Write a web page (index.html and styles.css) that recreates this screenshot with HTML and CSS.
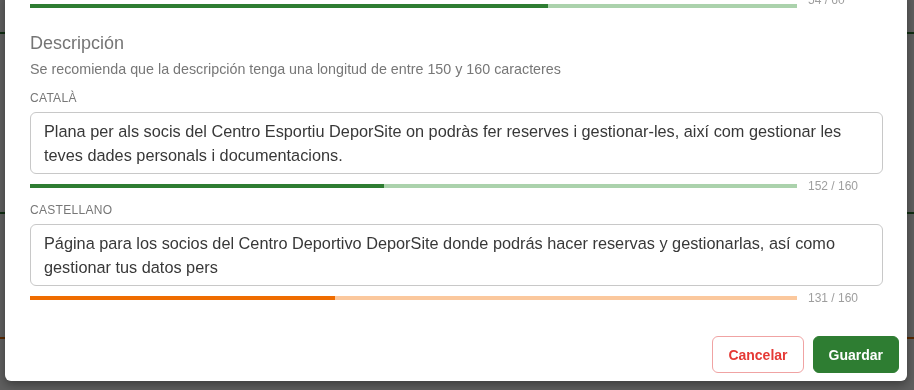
FILE: index.html
```html
<!DOCTYPE html>
<html lang="es">
<head>
  <meta charset="UTF-8" />
  <meta name="viewport" content="width=device-width, initial-scale=1.0" />
  <title>Descripción</title>
  <link rel="stylesheet" href="styles.css">
</head>
<body>

  <div class="page">
    <div class="page-line line-green first"></div>
    <div class="page-line line-green second"></div>
    <div class="page-line line-orange third"></div>
  </div>

  <div class="backdrop"></div>

  <div class="dialog">
    <div class="dialog-content">

      <div class="meter meter-prev">
        <div class="track green"><div class="fill" style="width: 67.5%;"></div></div>
        <span class="count">54 / 60</span>
      </div>

      <h2 class="section-title">Descripción</h2>
      <p class="hint">Se recomienda que la descripción tenga una longitud de entre 150 y 160 caracteres</p>

      <div class="field">
        <label class="field-label">Català</label>
        <div class="field-input">Plana per als socis del Centro Esportiu DeporSite on podràs fer reserves i gestionar-les, així com gestionar les teves dades personals i documentacions.</div>
        <div class="meter">
          <div class="track green"><div class="fill" style="width: 46.2%;"></div></div>
          <span class="count">152 / 160</span>
        </div>
      </div>

      <div class="field">
        <label class="field-label">Castellano</label>
        <div class="field-input">Página para los socios del Centro Deportivo DeporSite donde podrás hacer reservas y gestionarlas, así como gestionar tus datos pers</div>
        <div class="meter">
          <div class="track orange"><div class="fill" style="width: 39.8%;"></div></div>
          <span class="count">131 / 160</span>
        </div>
      </div>

    </div>

    <div class="dialog-actions">
      <button class="btn btn-cancel">Cancelar</button>
      <button class="btn btn-save">Guardar</button>
    </div>
  </div>

</body>
</html>
```

FILE: styles.css
```css
body {
  margin: 0;
  height: 390px;
  overflow: hidden;
  background-color: #fff;
  font-family: "Liberation Sans", Arial, sans-serif;
}

.page {
  padding-top: 32px;
}

.page-line {
  height: 2px;
}

.page-line.line-green {
  background-color: #2e7d32;
}

.page-line.line-orange {
  background-color: #ef6c00;
}

.page-line.second {
  margin-top: 178px;
}

.page-line.third {
  margin-top: 123px;
}

.backdrop {
  position: fixed;
  inset: 0;
  background-color: rgba(0, 0, 0, 0.63);
}

.dialog {
  position: fixed;
  top: -10px;
  bottom: 9px;
  left: 5px;
  width: 902px;
  background-color: #fff;
  border-radius: 6px;
  box-shadow: 0 4px 10px rgba(0, 0, 0, 0.35);
  display: flex;
  flex-direction: column;
}

.dialog-content {
  padding: 8px 24px 0 25px;
}

.meter {
  display: flex;
  align-items: center;
  height: 16px;
  margin-top: 4px;
}

.meter.meter-prev {
  margin-top: 0;
}

.meter.meter-prev .count {
  margin-bottom: 12px;
}

.track {
  flex: 1;
  height: 4px;
}

.track .fill {
  height: 100%;
}

.track.green {
  background-color: #abd2ac;
}

.track.green .fill {
  background-color: #2e7d32;
}

.track.orange {
  background-color: #fbc89d;
}

.track.orange .fill {
  background-color: #ef6c00;
}

.count {
  width: 75px;
  padding-left: 11px;
  font-size: 12px;
  line-height: 16px;
  color: #9e9e9e;
}

.section-title {
  margin: 18px 0 0;
  font-size: 18px;
  line-height: 22px;
  font-weight: normal;
  color: #757575;
}

.hint {
  margin: 6px 0 0;
  font-size: 14.3px;
  line-height: 18px;
  color: #777;
}

.field {
  margin-top: 13px;
}

.field + .field {
  margin-top: 9px;
}

.field-label {
  display: block;
  font-size: 12px;
  line-height: 14px;
  letter-spacing: 0.3px;
  text-transform: uppercase;
  color: #777;
}

.field-input {
  margin-top: 7px;
  height: 48px;
  padding: 6px 13px;
  border: 1px solid #c8c8c8;
  border-radius: 6px;
  font-size: 16.3px;
  line-height: 24px;
  color: #383838;
}

.dialog-actions {
  margin-top: auto;
  padding: 8px;
  display: flex;
  justify-content: flex-end;
  gap: 9px;
}

.btn {
  height: 37px;
  padding: 0 15px;
  border-radius: 6px;
  font-family: "Liberation Sans", Arial, sans-serif;
  font-size: 14px;
  font-weight: bold;
  cursor: pointer;
}

.btn-cancel {
  background-color: #fff;
  border: 1px solid #f0a3a3;
  color: #e53935;
}

.btn-save {
  background-color: #2e7d32;
  border: 1px solid #2e7d32;
  color: #fff;
}
```
